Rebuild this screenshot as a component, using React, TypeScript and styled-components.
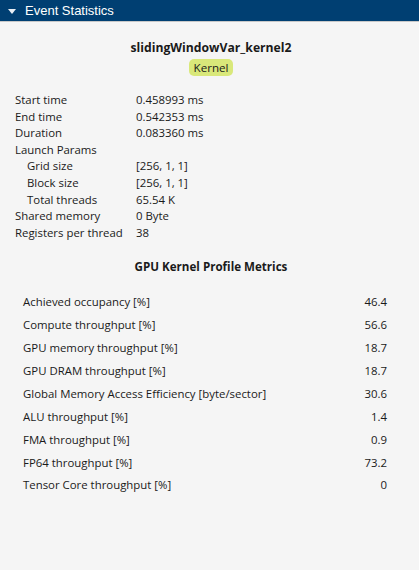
import React from "react";
import styled, { createGlobalStyle } from "styled-components";

const GlobalStyle = createGlobalStyle`
  html, body {
    margin: 0;
    padding: 0;
    background: #f5f5f5;
  }
  body {
    font-family: "Open Sans", "Noto Sans", sans-serif;
    color: #1a1a1a;
  }
`;

type Row = { label: string; value: string; indent?: boolean };

const info: Row[] = [
  { label: "Start time", value: "0.458993 ms" },
  { label: "End time", value: "0.542353 ms" },
  { label: "Duration", value: "0.083360 ms" },
  { label: "Launch Params", value: "" },
  { label: "Grid size", value: "[256, 1, 1]", indent: true },
  { label: "Block size", value: "[256, 1, 1]", indent: true },
  { label: "Total threads", value: "65.54 K", indent: true },
  { label: "Shared memory", value: "0 Byte" },
  { label: "Registers per thread", value: "38" },
];

const metrics: Row[] = [
  { label: "Achieved occupancy [%]", value: "46.4" },
  { label: "Compute throughput [%]", value: "56.6" },
  { label: "GPU memory throughput [%]", value: "18.7" },
  { label: "GPU DRAM throughput [%]", value: "18.7" },
  { label: "Global Memory Access Efficiency [byte/sector]", value: "30.6" },
  { label: "ALU throughput [%]", value: "1.4" },
  { label: "FMA throughput [%]", value: "0.9" },
  { label: "FP64 throughput [%]", value: "73.2" },
  { label: "Tensor Core throughput [%]", value: "0" },
];

const App = () => {
  return (
    <Page>
      <GlobalStyle />
      <Header>
        <Caret viewBox="0 0 8 5" width="8" height="5">
          <path d="M0 0 L8 0 L4 5 Z" fill="#e8eef5" />
        </Caret>
        <HeaderTitle>Event Statistics</HeaderTitle>
      </Header>
      <Body>
        <KernelName>slidingWindowVar_kernel2</KernelName>
        <BadgeRow>
          <Badge>Kernel</Badge>
        </BadgeRow>
        <InfoTable>
          {info.map((r) => (
            <React.Fragment key={r.label}>
              <InfoLabel $indent={r.indent}>{r.label}</InfoLabel>
              <InfoValue>{r.value}</InfoValue>
            </React.Fragment>
          ))}
        </InfoTable>
        <SectionTitle>GPU Kernel Profile Metrics</SectionTitle>
        <MetricList>
          {metrics.map((m) => (
            <MetricRow key={m.label}>
              <span>{m.label}</span>
              <span>{m.value}</span>
            </MetricRow>
          ))}
        </MetricList>
      </Body>
    </Page>
  );
};

export default App;

const Page = styled.div`
  width: 419px;
  height: 570px;
  background: #f5f5f5;
  overflow: hidden;
`;

const Header = styled.div`
  height: 21px;
  background: #003f72;
  border-bottom: 1px solid #c8c8c8;
  display: flex;
  align-items: center;
  padding-left: 8px;
  gap: 9px;
`;

const Caret = styled.svg`
  display: block;
  margin-top: 1px;
`;

const HeaderTitle = styled.span`
  font-family: "Liberation Sans", Arial, sans-serif;
  font-size: 13px;
  color: #ffffff;
`;

const Body = styled.div`
  padding: 17px 0 0;
  font-size: 11.4px;
`;

const KernelName = styled.div`
  text-align: center;
  font-weight: 700;
  font-size: 12.2px;
  line-height: 17px;
  padding-left: 3px;
`;

const BadgeRow = styled.div`
  display: flex;
  justify-content: center;
  margin-top: 3px;
  padding-left: 3px;
`;

const Badge = styled.span`
  background: #d9e87a;
  border-radius: 5px;
  padding: 0 5px;
  font-size: 11.6px;
  line-height: 17px;
`;

const InfoTable = styled.div`
  display: grid;
  grid-template-columns: 121px 1fr;
  padding: 16px 0 0 15px;
  line-height: 16.6px;
`;

const InfoLabel = styled.span<{ $indent?: boolean }>`
  padding-left: ${(p) => (p.$indent ? "12px" : "0")};
`;

const InfoValue = styled.span``;

const SectionTitle = styled.div`
  text-align: center;
  font-weight: 700;
  font-size: 11.6px;
  margin-top: 17px;
  line-height: 17px;
  padding-left: 3px;
`;

const MetricList = styled.div`
  padding: 18px 32px 0 23px;
`;

const MetricRow = styled.div`
  display: flex;
  justify-content: space-between;
  line-height: 17px;
  margin-bottom: 5.9px;
`;
